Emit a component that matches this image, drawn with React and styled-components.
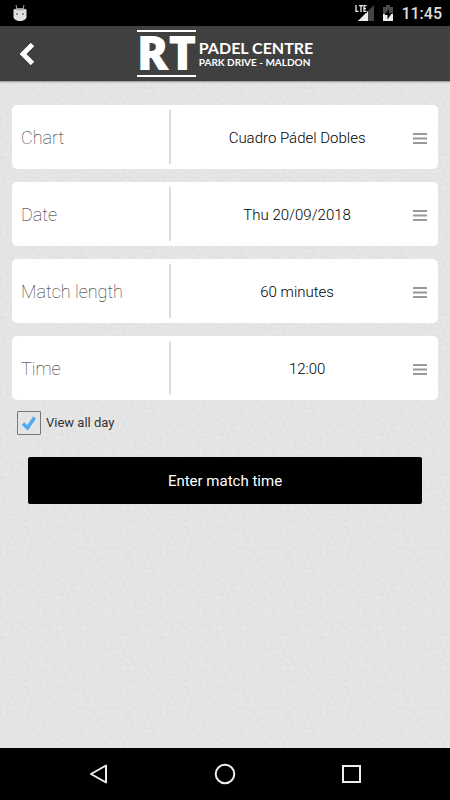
import React, { useState } from "react";
import styled, { createGlobalStyle } from "styled-components";

const grain =
  "url(\"data:image/svg+xml,%3Csvg xmlns='http://www.w3.org/2000/svg' width='160' height='160'%3E%3Cfilter id='n' x='0' y='0' width='1' height='1' color-interpolation-filters='sRGB'%3E%3CfeTurbulence type='fractalNoise' baseFrequency='0.3' numOctaves='2' stitchTiles='stitch'/%3E%3CfeColorMatrix values='0.05 0 0 0 0.87 0.05 0 0 0 0.87 0.05 0 0 0 0.87 0 0 0 0 1'/%3E%3C/filter%3E%3Crect width='160' height='160' filter='url(%23n)'/%3E%3C/svg%3E\")";

const GlobalStyle = createGlobalStyle`
  *, *::before, *::after { box-sizing: border-box; }
  body { margin: 0; font-family: Roboto, sans-serif; color: #000; }
  button, select, input { font: inherit; color: inherit; margin: 0; }
`;

const Screen = styled.div`
  display: flex;
  flex-direction: column;
  min-height: 100vh;
  background: #e4e4e4 ${grain};
`;

const StatusBar = styled.div`
  display: flex;
  align-items: center;
  justify-content: space-between;
  height: 26px;
  padding: 0 8px 0 12px;
  background: #000;
  color: #ececec;
`;

const StatusIcons = styled.div`
  display: flex;
  align-items: center;
  gap: 7px;
`;

const Clock = styled.span`
  padding-top: 2px;
  font-size: 16px;
  line-height: 24px;
  font-weight: 500;
  color: #dedede;
`;

const Header = styled.header`
  display: grid;
  grid-template-columns: 52px 1fr 52px;
  align-items: center;
  height: 56px;
  background: #404040;
  border-bottom: 1px solid #a5a5a5;
  box-shadow: 0 1px 1px #cfcfcf;
`;

const BackButton = styled.button`
  display: flex;
  justify-content: flex-end;
  padding: 0 16px 0 0;
  border: 0;
  background: none;
`;

const Logo = styled.div`
  display: flex;
  align-items: center;
  justify-content: center;
  gap: 3px;
  color: #fff;
`;

const Monogram = styled.div`
  width: 59px;
  height: 47px;
  border-top: 2px solid #fff;
  border-bottom: 2px solid #fff;
  font-family: "Open Sans", sans-serif;
  font-size: 47px;
  line-height: 41px;
  font-weight: 800;
  white-space: nowrap;
`;

const LogoLines = styled.div`
  display: flex;
  flex-direction: column;
  font-family: Lato, sans-serif;
  font-weight: 700;
  white-space: nowrap;
`;

const LogoName = styled.span`
  font-size: 16px;
  line-height: 17px;
`;

const LogoPlace = styled.span`
  font-size: 10px;
  line-height: 13px;
`;

const Main = styled.main`
  flex: 1;
  display: flex;
  flex-direction: column;
  padding: 23px 12px;
`;

const Fields = styled.div`
  display: flex;
  flex-direction: column;
  gap: 13px;
`;

const Field = styled.div`
  display: flex;
  align-items: center;
  height: 64px;
  padding: 0 11px 0 9px;
  background: #fff;
  border-radius: 5px;
`;

const FieldLabel = styled.label`
  width: 37%;
  height: 54px;
  border-right: 2px solid #dcdcdc;
  font-size: 18px;
  line-height: 56px;
  font-weight: 100;
  color: #222;
`;

const FieldSelect = styled.select`
  flex: 1;
  min-width: 0;
  height: 54px;
  padding: 2px 0 0 ${(p) => (p.$indent ? "30px" : "10px")};
  border: 0;
  appearance: none;
  background: none;
  font-size: 15px;
  font-weight: 300;
  text-align: center;
  text-align-last: center;
`;

const DayOption = styled.label`
  display: flex;
  align-items: center;
  align-self: flex-start;
  gap: 5px;
  margin: 11px 0 0 5px;
  font-size: 13px;
  line-height: 24px;
  color: #333;
`;

const CheckWrap = styled.span`
  display: grid;
  width: 24px;
  height: 24px;
  & > * { grid-area: 1 / 1; }
  & > svg { pointer-events: none; }
  & > input:not(:checked) + svg { visibility: hidden; }
`;

const CheckInput = styled.input`
  appearance: none;
  width: 24px;
  height: 24px;
  border: 1px solid #777;
  border-radius: 1px;
`;

const SubmitButton = styled.button`
  height: 47px;
  margin: 22px 16px 0;
  border: 0;
  border-radius: 2px;
  background: #000;
  color: #fff;
  font-size: 15px;
`;

const NavBar = styled.nav`
  display: flex;
  align-items: center;
  justify-content: center;
  gap: 102px;
  height: 52px;
  background: #000;
`;

const NavButton = styled.button`
  display: flex;
  padding: 0;
  border: 0;
  background: none;
`;

const DroidIcon = () => (
  <svg width="16" height="18" viewBox="0 0 16 18" aria-hidden="true">
    <path d="M5 5 4 1M11 5l1-4" stroke="#aaa" strokeWidth="1" />
    <path d="M1.500 5.500C3 4 13 4 14.500 5.500V13c0 2-3 4-6.500 4s-6.500-2-6.500-4Z" fill="#e2e2e2" />
    <path d="M1.500 5.500C3 4 13 4 14.500 5.500 12 7 4 7 1.500 5.500Z" fill="#b5b5b5" />
    <circle cx="5" cy="10" r=".8" fill="#222" />
    <circle cx="11" cy="10" r=".8" fill="#222" />
  </svg>
);

const SignalIcon = () => (
  <svg width="20" height="18" viewBox="0 0 20 18" aria-label="LTE signal">
    <path d="M19 1v16H3Z" fill="#454545" />
    <path d="M13 7v10H3Z" fill="#eee" />
    <path d="M0 0h12v9H0Z" fill="#000" />
    <path d="M1 1v6.300h2.500M4 1.700h4M6 1.700V8M11.500 1.700H9v5.600h2.500M9 4.500h2" fill="none" stroke="#eee" strokeWidth="1.300" />
  </svg>
);

const BatteryIcon = () => (
  <svg width="12" height="18" viewBox="0 0 12 18" aria-label="Battery charging">
    <path d="M4 1h4v2h3v14H1V3h3Z" fill="#4b4b4b" />
    <path d="M1 10h10v7H1Z" fill="#eee" />
    <path d="M7 5 2.500 11H5.500V15.500L10 9H7Z" fill="#000" />
  </svg>
);

const BackIcon = () => (
  <svg width="17" height="24" viewBox="0 0 17 24" aria-hidden="true">
    <path d="M13.500 2.500 4 12l9.500 9.500" fill="none" stroke="#222" strokeWidth="6" />
    <path d="M13.500 2.500 4 12l9.500 9.500" fill="none" stroke="#fff" strokeWidth="5" />
  </svg>
);

const LinesIcon = () => (
  <svg width="14" height="16" viewBox="0 0 14 16" aria-hidden="true">
    <path d="M0 5h14M0 9.500h14M0 14h14" stroke="#999" strokeWidth="2" />
  </svg>
);

const TickIcon = () => (
  <svg width="24" height="24" viewBox="0 0 24 24" aria-hidden="true">
    <path d="M6 12.500 10.500 17 17.500 6.500" fill="none" stroke="#4fa9f3" strokeWidth="3.500" />
  </svg>
);

const fields = [
  { id: "chart", label: "Chart", value: "Cuadro Pádel Dobles" },
  { id: "date", label: "Date", value: "Thu 20/09/2018" },
  { id: "length", label: "Match length", value: "60 minutes" },
  { id: "time", label: "Time", value: "12:00", indent: true },
];

export default function App() {
  const [allDay, setAllDay] = useState(true);
  return (
    <Screen>
      <GlobalStyle />
      <StatusBar>
        <DroidIcon />
        <StatusIcons>
          <SignalIcon />
          <BatteryIcon />
          <Clock>11:45</Clock>
        </StatusIcons>
      </StatusBar>
      <Header>
        <BackButton aria-label="Back">
          <BackIcon />
        </BackButton>
        <Logo>
          <Monogram>RT</Monogram>
          <LogoLines>
            <LogoName>PADEL CENTRE</LogoName>
            <LogoPlace>PARK DRIVE - MALDON</LogoPlace>
          </LogoLines>
        </Logo>
      </Header>
      <Main>
        <Fields>
          {fields.map((f) => (
            <Field key={f.id}>
              <FieldLabel htmlFor={f.id}>{f.label}</FieldLabel>
              <FieldSelect id={f.id} $indent={f.indent}>
                <option>{f.value}</option>
              </FieldSelect>
              <LinesIcon />
            </Field>
          ))}
        </Fields>
        <DayOption>
          <CheckWrap>
            <CheckInput
              type="checkbox"
              checked={allDay}
              onChange={(e) => setAllDay(e.target.checked)}
            />
            <TickIcon />
          </CheckWrap>
          View all day
        </DayOption>
        <SubmitButton type="button">Enter match time</SubmitButton>
      </Main>
      <NavBar>
        <NavButton aria-label="Back">
          <svg width="24" height="24" viewBox="0 0 24 24">
            <path d="M19 3.500v17L4 12Z" fill="none" stroke="#eee" strokeWidth="2" strokeLinejoin="round" />
          </svg>
        </NavButton>
        <NavButton aria-label="Home">
          <svg width="24" height="24" viewBox="0 0 24 24">
            <circle cx="12" cy="12" r="9.300" fill="none" stroke="#eee" strokeWidth="2" />
          </svg>
        </NavButton>
        <NavButton aria-label="Recent apps">
          <svg width="24" height="24" viewBox="0 0 24 24">
            <rect x="4" y="4" width="17" height="16" fill="none" stroke="#eee" strokeWidth="2" />
          </svg>
        </NavButton>
      </NavBar>
    </Screen>
  );
}
